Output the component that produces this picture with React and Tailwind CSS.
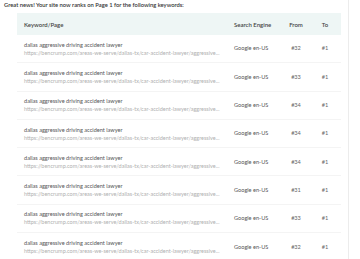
const rows = [
  { from: "#32", to: "#1" },
  { from: "#33", to: "#1" },
  { from: "#34", to: "#1" },
  { from: "#34", to: "#1" },
  { from: "#34", to: "#1" },
  { from: "#31", to: "#1" },
  { from: "#33", to: "#1" },
  { from: "#32", to: "#1" },
];

const cols = "grid grid-cols-[210px_56px_26px_32px]";

export default function App() {
  return (
    <div
      className="relative w-[360px] h-[259px] overflow-hidden bg-white text-[#333]"
      style={{ fontFamily: "Lato, 'Open Sans', sans-serif" }}
    >
      <div className="absolute left-[348px] top-0 h-full w-px bg-[#ececec]" />

      <p className="pl-[4px] pt-[1px] text-[5.8px] leading-[7px] font-semibold text-[#333]">
        Great news! Your site now ranks on Page 1 for the following keywords:
      </p>

      <div className="ml-[17px] mt-[5px] w-[324px]">
        <div className={`${cols} h-[22px] items-center bg-[#eef6f5] text-[6px] font-semibold text-[#444]`}>
          <div className="pl-[7px]">Keyword/Page</div>
          <div className="pl-[7px]">Search Engine</div>
          <div className="text-center">From</div>
          <div className="text-center">To</div>
        </div>

        {rows.map((r, i) => (
          <div
            key={i}
            className={`${cols} h-[28.3px] items-center border-b border-[#f4f4f4] text-[5.6px]`}
          >
            <div className="pl-[7px] leading-[8px]">
              <div className="text-[#555]">dallas aggressive driving accident lawyer</div>
              <div className="text-[#b0b0b0] text-[5.5px] whitespace-nowrap">
                https://bencrump.com/areas-we-serve/dallas-tx/car-accident-lawyer/aggressive...
              </div>
            </div>
            <div className="pl-[7px] text-[#555]">Google en-US</div>
            <div className="text-center text-[#666]">{r.from}</div>
            <div className="text-center text-[#666]">{r.to}</div>
          </div>
        ))}
      </div>
    </div>
  );
}
